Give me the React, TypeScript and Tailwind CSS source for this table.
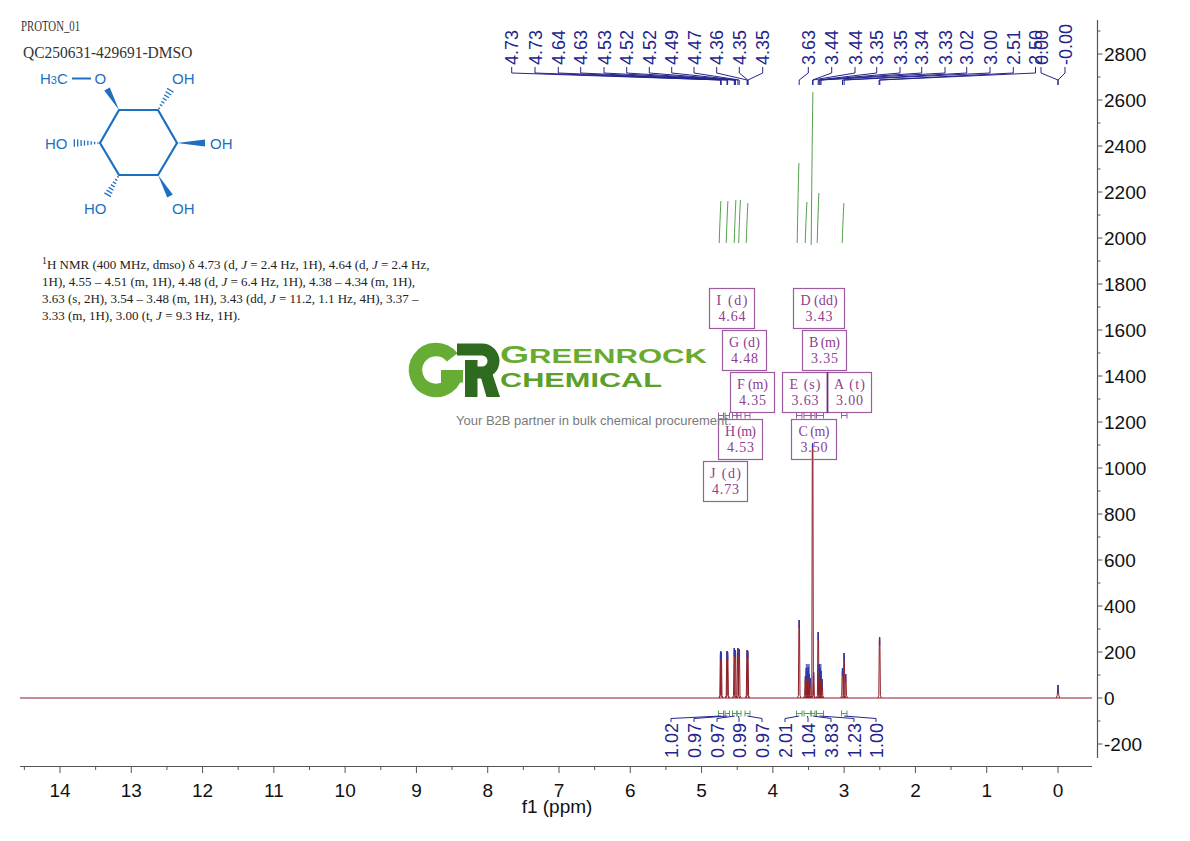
import React from "react";

const RED = "#8e1f27";
const BLUE = "#24248c";
const GREEN = "#55a04c";
const PURPLE = "#9d5ba2";
const PURPLE_TXT = "#8c3e90";
const SANS = "'Liberation Sans', Arial, sans-serif";
const SERIF = "'Liberation Serif', 'Times New Roman', serif";
const MOL = "#1d6fc0";

const X = (p: number) => 1058 - p * 71.286;
const Y = (v: number) => 698 - v * 0.23;

const peaks: [number, number][] = [
  [720.6, 651], [721.2, 652], [727.0, 651], [727.6, 652], [734.3, 648], [735.4, 650],
  [737.9, 648], [739.2, 649], [747.1, 650], [747.8, 651],
  [799.2, 620],
  [805.4, 676], [806.3, 668], [807.2, 671], [808.2, 667], [809.2, 674], [810.2, 678],
  [812.6, 443], [813.6, 672],
  [818.2, 632], [819.2, 664], [820.1, 668], [821.0, 671], [822.0, 679],
  [842.5, 668], [844.1, 653], [845.7, 674],
  [879.6, 637],
  [1058, 685],
];

function spike(x: number, top: number) {
  const w = top < 600 ? 2.2 : 1.8;
  return `M${x - w},698 L${x - 0.8},695.5 L${x - 0.3},${top + 4} L${x},${top} L${x + 0.3},${top + 4} L${x + 0.8},695.5 L${x + w},698`;
}

const topLabels: [string, number, number][] = [
  ["4.73", 511.7, 720.6], ["4.73", 535, 721.2], ["4.64", 558.3, 727.0], ["4.63", 580.7, 727.6],
  ["4.53", 604, 734.3], ["4.52", 626.7, 735.0], ["4.52", 649.3, 735.4], ["4.49", 671.7, 737.9],
  ["4.47", 694, 739.2], ["4.36", 716.7, 747.1], ["4.35", 739.3, 747.8], ["4.35", 762.7, 748.0],
  ["3.63", 808.3, 799.2], ["3.44", 831.7, 812.6], ["3.44", 855, 813.0], ["3.35", 876.7, 818.2],
  ["3.35", 900, 819.2], ["3.34", 921.7, 820.1], ["3.33", 945, 821.0], ["3.02", 966.7, 842.5],
  ["3.00", 990, 844.1], ["2.51", 1013.3, 879.1], ["2.50", 1035.5, 879.8], ["0.00", 1041, 1058],
  ["-0.00", 1065, 1058],
];

const integrals: [string, number, number][] = [
  ["1.02", 671, 720.9], ["0.97", 694, 727.3], ["0.97", 717, 734.8], ["0.99", 739, 738.6],
  ["0.97", 762, 747.4], ["2.01", 785, 799.2], ["1.04", 808, 807.5], ["3.83", 831, 812.8],
  ["1.23", 854, 819.8], ["1.00", 876, 844.1],
];

const regions: [number, number][] = [
  [718.5, 723.5], [725, 729.5], [732.5, 737], [737, 741], [745, 750],
  [796.5, 802], [804, 811], [811, 815], [816.5, 823.5], [841.5, 847],
];

const intCurves: [number, number, number][] = [
  [720, 243, 201], [727, 243, 201], [735, 243, 200], [739.5, 243, 200], [747, 243, 203],
  [798, 243, 163], [806, 243, 202], [812, 245, 92], [818, 243, 193], [843, 243, 203],
];

const boxes: [string, string, number, number, number][] = [
  ["I (d)", "4.64", 709, 288, 45],
  ["D (dd)", "3.43", 793, 288, 51],
  ["G (d)", "4.48", 722, 330, 44],
  ["B (m)", "3.35", 802, 330, 44],
  ["F (m)", "4.35", 730, 372, 44],
  ["E (s)", "3.63", 782, 372, 45],
  ["A (t)", "3.00", 827, 372, 44],
  ["H (m)", "4.53", 718, 419, 44],
  ["C (m)", "3.50", 791, 419, 45],
  ["J (d)", "4.73", 703, 461, 44],
];

function Chart() {
  const yMajor: number[] = [];
  for (let v = -200; v <= 2800; v += 200) yMajor.push(v);
  const yMinor: number[] = [];
  for (let v = -100; v <= 2900; v += 200) yMinor.push(v);
  const xMajor: number[] = [];
  for (let p = 0; p <= 14; p++) xMajor.push(p);
  const xMinor: number[] = [];
  for (let p = 0.5; p <= 14.5; p += 1) xMinor.push(p);

  return (
    <svg className="absolute inset-0" width={1190} height={841} viewBox="0 0 1190 841">
      <line x1={20} y1={698} x2={1092} y2={698} stroke={RED} strokeWidth={1.1} />
      {peaks.map(([x, t], i) => (
        <path key={"p" + i} d={spike(x, t)} fill="none" stroke={RED} strokeWidth={1} />
      ))}
      {peaks.map(([x, t], i) => (
        <line key={"pb" + i} x1={x} y1={t} x2={x} y2={t + (t < 600 ? 4 : 8)} stroke="#2a3cb0" strokeWidth={1.3} />
      ))}
      {[806.3, 807.2, 808.2, 809.2, 819.2, 820.1, 821.0].map((x, i) => (
        <line key={"bm" + i} x1={x} y1={664} x2={x} y2={680} stroke="#2a3cb0" strokeWidth={1} opacity={0.8} />
      ))}

      {intCurves.map(([x, b, t], i) => {
        const h = b - t;
        return (
          <path key={"ic" + i}
            d={`M${x - 0.8},${b} C${x - 0.4},${b - h * 0.3} ${x + 0.2},${t + h * 0.3} ${x + 0.9},${t}`}
            fill="none" stroke={GREEN} strokeWidth={1} />
        );
      })}

      {topLabels.map(([s, lx, px], i) => (
        <g key={"tl" + i}>
          <text x={lx + 6.5} y={65} transform={`rotate(-90 ${lx + 6.5} 65)`} fontFamily={SANS} fontSize={18} fill={BLUE}>{s}</text>
          <path d={`M${lx},67 L${lx},73 L${px},80 L${px},85`} fill="none" stroke={BLUE} strokeWidth={1} />
        </g>
      ))}

      {boxes.map(([a, b, x, y, w], i) => (
        <g key={"bx" + i}>
          <rect x={x + 0.5} y={y + 0.5} width={w} height={40} fill="none" stroke={PURPLE} strokeWidth={1.2} />
          <text x={x + w / 2 + 0.5} y={y + 17} textAnchor="middle" fontFamily={SERIF} fontSize={14} fill={PURPLE_TXT}
            textLength={a.length * 6.2} lengthAdjust="spacing">{a}</text>
          <text x={x + w / 2 + 0.5} y={y + 32.5} textAnchor="middle" fontFamily={SERIF} fontSize={14} fill={PURPLE_TXT}
            textLength={27} lengthAdjust="spacing">{b}</text>
        </g>
      ))}
      <line x1={827.5} y1={372} x2={827.5} y2={413} stroke="#7a2a80" strokeWidth={1.6} />
      {regions.map(([a, b], i) => (
        <path key={"mr" + i} d={`M${a},412.5 L${a},418.5 M${a},415.5 L${b},415.5 M${b},412.5 L${b},418.5`}
          fill="none" stroke={PURPLE} strokeWidth={1} />
      ))}

      {regions.map(([a, b], i) => (
        <path key={"ir" + i} d={`M${a},710.5 L${a},716.5 M${a},713.5 L${b},713.5 M${b},710.5 L${b},716.5`}
          fill="none" stroke={GREEN} strokeWidth={1} />
      ))}
      {integrals.map(([s, lx, rc], i) => (
        <g key={"il" + i}>
          <path d={`M${lx},722 L${lx},718.5 L${rc},716`} fill="none" stroke={BLUE} strokeWidth={1} />
          <text x={lx + 6.5} y={723} transform={`rotate(-90 ${lx + 6.5} 723)`} textAnchor="end" fontFamily={SANS} fontSize={18} fill={BLUE}>{s}</text>
        </g>
      ))}

      <line x1={1097.5} y1={20} x2={1097.5} y2={758} stroke="#555" strokeWidth={1.2} />
      {yMajor.map((v) => (
        <g key={"ym" + v}>
          <line x1={1097.5} y1={Y(v)} x2={1102.5} y2={Y(v)} stroke="#555" strokeWidth={1} />
          <text x={1104} y={Y(v) + 6.8} fontFamily={SANS} fontSize={19} fill="#111">{v}</text>
        </g>
      ))}
      {yMinor.map((v) => (
        <line key={"yn" + v} x1={1097.5} y1={Y(v)} x2={1100.5} y2={Y(v)} stroke="#555" strokeWidth={1} />
      ))}

      <line x1={20} y1={766.5} x2={1092} y2={766.5} stroke="#555" strokeWidth={1.2} />
      {xMajor.map((p) => (
        <g key={"xm" + p}>
          <line x1={X(p)} y1={766.5} x2={X(p)} y2={773} stroke="#555" strokeWidth={1} />
          <text x={X(p)} y={796.5} textAnchor="middle" fontFamily={SANS} fontSize={19} fill="#111">{p}</text>
        </g>
      ))}
      {xMinor.map((p) => (
        <line key={"xn" + p} x1={X(p)} y1={766.5} x2={X(p)} y2={770} stroke="#555" strokeWidth={1} />
      ))}
      <text x={557} y={813} textAnchor="middle" fontFamily={SANS} fontSize={19} fill="#111">f1 (ppm)</text>
    </svg>
  );
}

function hashes(x1: number, y1: number, x2: number, y2: number, n = 7, maxHalf = 3.4) {
  const dx = x2 - x1, dy = y2 - y1;
  const L = Math.hypot(dx, dy);
  const px = -dy / L, py = dx / L;
  const out: React.ReactElement[] = [];
  for (let i = 0; i < n; i++) {
    const t = (i + 0.6) / n;
    const cx = x1 + dx * t, cy = y1 + dy * t;
    const h = 0.6 + maxHalf * t;
    out.push(
      <line key={`${x1}-${y1}-${i}`} x1={cx - px * h} y1={cy - py * h} x2={cx + px * h} y2={cy + py * h} stroke={MOL} strokeWidth={1.3} />
    );
  }
  return out;
}

function wedge(x1: number, y1: number, x2: number, y2: number, half = 3.2) {
  const dx = x2 - x1, dy = y2 - y1;
  const L = Math.hypot(dx, dy);
  const px = -dy / L, py = dx / L;
  return `${x1},${y1} ${x2 + px * half},${y2 + py * half} ${x2 - px * half},${y2 - py * half}`;
}

function Structure() {
  const A = [119, 110], B = [158, 110], C = [177, 143], D = [158, 175], E = [119, 175], F = [100, 143];
  const ring = [A, B, C, D, E, F];
  return (
    <svg width={250} height={158} viewBox="21 62 250 158" className="block">
      <polygon points={ring.map((p) => p.join(",")).join(" ")} fill="none" stroke={MOL} strokeWidth={2.2} strokeLinejoin="round" />
      <polygon points={wedge(119, 110, 107, 89)} fill={MOL} />
      <polygon points={wedge(177, 143, 205, 143, 3.6)} fill={MOL} />
      <polygon points={wedge(158, 175, 170, 196)} fill={MOL} />
      {hashes(158, 110, 171, 89)}
      {hashes(100, 143, 73, 143, 8)}
      {hashes(119, 175, 107, 196)}
      <line x1={72} y1={78.5} x2={91} y2={78.5} stroke={MOL} strokeWidth={2} />
      <g fontFamily={SANS} fontSize={15} fill={MOL}>
        <text x={40} y={84}>H<tspan fontSize={11}>3</tspan>C</text>
        <text x={94.5} y={84}>O</text>
        <text x={172} y={84}>OH</text>
        <text x={45} y={149}>HO</text>
        <text x={210} y={149}>OH</text>
        <text x={84} y={214}>HO</text>
        <text x={172} y={214}>OH</text>
      </g>
    </svg>
  );
}

function Logo() {
  return (
    <svg className="absolute left-[405px] top-[336px]" width={310} height={66} viewBox="405 336 310 66">
      <path d="M452.2,357.4 A20.5 20.5 0 1 0 456.5,370" fill="none" stroke="#66ac35" strokeWidth={13.5} />
      <rect x={441} y={370} width={22} height={12.5} fill="#66ac35" />
      <path d="M457,349.5 L482,349.5 A11.5 11.5 0 0 1 482,372.5 L470,372.5" fill="none" stroke="#2f6b1f" strokeWidth={12} />
      <rect x={465} y={360} width={12.5} height={37} fill="#2f6b1f" />
      <polygon points="479,371 491.5,371 500,397 486.5,397" fill="#2f6b1f" />
      <text x={500} y={362.5} fontFamily={SANS} fontWeight={600} fill="#6aab2e" textLength={207} lengthAdjust="spacingAndGlyphs">
        <tspan fontSize={23.5}>G</tspan><tspan fontSize={19.5}>REENROCK</tspan>
      </text>
      <text x={500} y={386.5} fontFamily={SANS} fontWeight={600} fontSize={21} fill="#5aa02b" textLength={162} lengthAdjust="spacingAndGlyphs">
        CHEMICAL
      </text>
    </svg>
  );
}

export default function App() {
  return (
    <div className="relative w-[1190px] h-[841px] overflow-hidden bg-white">
      <Chart />
      <div className="relative z-10 w-[470px] pl-[21px] pt-[19px]">
        <div className="h-[16px] whitespace-nowrap font-['Liberation_Serif','Times_New_Roman',serif] text-[14px] leading-[16px] text-[#333] origin-left scale-x-[0.77]">
          PROTON_01
        </div>
        <div className="mt-[9px] ml-[2px] h-[18px] whitespace-nowrap font-['Liberation_Serif','Times_New_Roman',serif] text-[17px] leading-[18px] text-[#333] origin-left scale-x-[0.91]">
          QC250631-429691-DMSO
        </div>
        <Structure />
        <div className="mt-[35.5px] ml-[21px] whitespace-nowrap font-['Liberation_Serif','Times_New_Roman',serif] text-[13px] leading-[17px] text-[#222]">
          <div><sup>1</sup>H NMR (400 MHz, dmso) δ 4.73 (d, <i>J</i> = 2.4 Hz, 1H), 4.64 (d, <i>J</i> = 2.4 Hz,</div>
          <div>1H), 4.55 – 4.51 (m, 1H), 4.48 (d, <i>J</i> = 6.4 Hz, 1H), 4.38 – 4.34 (m, 1H),</div>
          <div>3.63 (s, 2H), 3.54 – 3.48 (m, 1H), 3.43 (dd, <i>J</i> = 11.2, 1.1 Hz, 4H), 3.37 –</div>
          <div>3.33 (m, 1H), 3.00 (t, <i>J</i> = 9.3 Hz, 1H).</div>
        </div>
      </div>
      <Logo />
      <div className="absolute left-[456px] top-[413px] whitespace-nowrap font-['Liberation_Sans',Arial,sans-serif] text-[13px] leading-[16px] text-[#7a7a7a]">
        Your B2B partner in bulk chemical procurement.
      </div>
    </div>
  );
}
